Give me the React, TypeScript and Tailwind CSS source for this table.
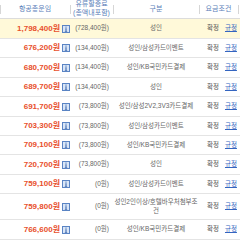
import type { ReactNode } from 'react';

const FONT = "font-['Liberation_Sans','Noto_Sans_CJK_KR',sans-serif]";

const ROWS = [
  { fare: '1,798,400', fuel: '(728,400원)', kind: '성인', h: 'h-[20px]', hl: true },
  { fare: '676,200', fuel: '(134,400원)', kind: '성인/삼성카드이벤트', h: 'h-[19px]' },
  { fare: '680,700', fuel: '(134,400원)', kind: '성인/KB국민카드결제', h: 'h-[20px]' },
  { fare: '689,700', fuel: '(134,400원)', kind: '성인', h: 'h-[19px]' },
  { fare: '691,700', fuel: '(73,800원)', kind: '성인/삼성2V2,3V3카드결제', h: 'h-[20px]' },
  { fare: '703,300', fuel: '(73,800원)', kind: '성인/삼성카드이벤트', h: 'h-[19px]' },
  { fare: '709,100', fuel: '(73,800원)', kind: '성인/KB국민카드결제', h: 'h-[19px]' },
  { fare: '720,700', fuel: '(73,800원)', kind: '성인', h: 'h-[20px]' },
  { fare: '759,100', fuel: '(0원)', kind: '성인/삼성카드이벤트', h: 'h-[19px]' },
  { fare: '759,800', fuel: '(0원)', kind: 'wrap', h: 'h-[26px]' },
  { fare: '766,600', fuel: '(0원)', kind: '성인/KB국민카드결제', h: 'h-[20px]' },
];

function InfoIcon() {
  return (
    <svg width="8" height="8" viewBox="0 0 8 8" className="ml-[2px] shrink-0">
      <rect x="0.5" y="0.5" width="7" height="7" fill="#d9e6f7" stroke="#5a84c4" />
      <rect x="3.5" y="1.6" width="1" height="1" fill="#2a59a6" />
      <rect x="3.5" y="3.2" width="1" height="3.2" fill="#2a59a6" />
      <rect x="2.8" y="6" width="2.4" height="0.6" fill="#2a59a6" />
    </svg>
  );
}

function HeadCell({ w, children }: { w: string; children?: ReactNode }) {
  return (
    <div className={`${w} relative flex h-full shrink-0 items-center justify-center text-center`}>
      <span className="absolute left-0 top-[5px] h-[9px] w-px bg-[#d6d6d6]" />
      {children}
    </div>
  );
}

export default function App() {
  return (
    <div className={`${FONT} h-[240px] w-[240px] overflow-hidden bg-white`}>
      <div className="flex h-[19px] border-b border-[#dcdcdc] text-[7px] leading-[9.5px] text-[#5b80b9]">
        <HeadCell w="w-[70px]">항공총운임</HeadCell>
        <HeadCell w="w-[43px]">
          <div className="-mt-[2px]">
            유류할증료
            <br />
            (총액내포함)
          </div>
        </HeadCell>
        <HeadCell w="w-[86px]">구분</HeadCell>
        <HeadCell w="w-[39px]">요금조건</HeadCell>
        <HeadCell w="w-[20px]" />
      </div>

      {ROWS.map((r) => (
        <div
          key={r.fare}
          className={`flex ${r.h} items-center border-b border-[#e4e4e4] ${r.hl ? 'bg-[#fff9d9]' : 'bg-white'}`}
        >
          <div className="flex w-[70px] shrink-0 items-center justify-end">
            <span className="text-[8px] font-bold leading-none text-[#e8502c]">{r.fare}원</span>
            <InfoIcon />
          </div>
          <div className="w-[43px] shrink-0 pr-[4px] text-right text-[6.5px] leading-none text-[#666]">
            {r.fuel}
          </div>
          <div className="w-[86px] shrink-0 whitespace-nowrap text-center text-[6.5px] leading-[8.5px] text-[#666]">
            {r.kind === 'wrap' ? (
              <>
                성인2인이상/호텔바우처첨부조
                <br />건
              </>
            ) : (
              r.kind
            )}
          </div>
          <div className="flex w-[41px] shrink-0 items-center gap-[6px] whitespace-nowrap pl-[8px] text-[6.5px] leading-none">
            <span className="text-[#555]">확정</span>
            <span className="text-[#3465c0] underline">규정</span>
          </div>
        </div>
      ))}
    </div>
  );
}
